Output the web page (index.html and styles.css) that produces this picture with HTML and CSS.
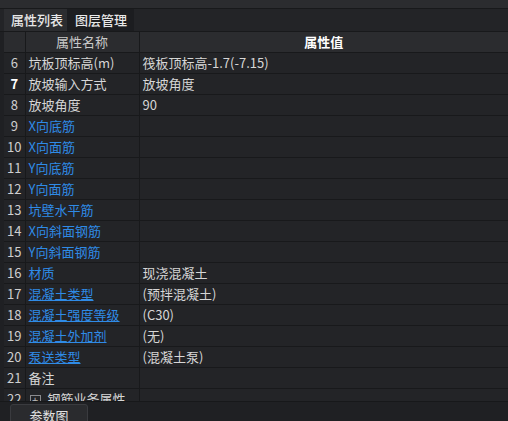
FILE: index.html
```html
<!DOCTYPE html>
<html lang="zh-CN">
<head>
<meta charset="utf-8">
<link rel="stylesheet" href="styles.css">
</head>
<body>
<div class="top"></div>
<div class="tabs">
  <div class="tab active">属性列表</div>
  <div class="tab">图层管理</div>
</div>
<div class="grid-wrap">
  <table class="grid">
    <colgroup><col class="c-num"><col class="c-name"><col class="c-val"></colgroup>
    <thead>
      <tr><th></th><th class="h-name">属性名称</th><th class="h-val">属性值</th></tr>
    </thead>
    <tbody>
      <tr><td class="num">6</td><td>坑板顶标高(m)</td><td>筏板顶标高-1.7(-7.15)</td></tr>
      <tr><td class="num cur">7</td><td>放坡输入方式</td><td>放坡角度</td></tr>
      <tr><td class="num">8</td><td>放坡角度</td><td>90</td></tr>
      <tr><td class="num">9</td><td class="blue">X向底筋</td><td></td></tr>
      <tr><td class="num">10</td><td class="blue">X向面筋</td><td></td></tr>
      <tr><td class="num">11</td><td class="blue">Y向底筋</td><td></td></tr>
      <tr><td class="num">12</td><td class="blue">Y向面筋</td><td></td></tr>
      <tr><td class="num">13</td><td class="blue">坑壁水平筋</td><td></td></tr>
      <tr><td class="num">14</td><td class="blue">X向斜面钢筋</td><td></td></tr>
      <tr><td class="num">15</td><td class="blue">Y向斜面钢筋</td><td></td></tr>
      <tr><td class="num">16</td><td class="blue">材质</td><td>现浇混凝土</td></tr>
      <tr><td class="num">17</td><td class="blue"><span class="ul">混凝土类型</span></td><td>(预拌混凝土)</td></tr>
      <tr><td class="num">18</td><td class="blue"><span class="ul">混凝土强度等级</span></td><td>(C30)</td></tr>
      <tr><td class="num">19</td><td class="blue"><span class="ul">混凝土外加剂</span></td><td>(无)</td></tr>
      <tr><td class="num">20</td><td class="blue"><span class="ul">泵送类型</span></td><td>(混凝土泵)</td></tr>
      <tr><td class="num">21</td><td>备注</td><td></td></tr>
      <tr><td class="num">22</td><td><span class="plus">+</span>钢筋业务属性</td><td></td></tr>
    </tbody>
  </table>
</div>
<div class="bottom">
  <div class="btn">参数图</div>
</div>
</body>
</html>
```

FILE: styles.css
```css
html, body {
  margin: 0;
  padding: 0;
}
body {
  width: 508px;
  height: 421px;
  overflow: hidden;
  background: #1f2023;
  font-family: "Noto Sans CJK SC", "Noto Sans", sans-serif;
  font-size: 13px;
  color: #d6d6d6;
}
.top {
  height: 8px;
  background: #2b2c2f;
  border-bottom: 1px solid #18191b;
}
.tabs {
  display: flex;
  height: 22px;
  padding-left: 4px;
  background: #232427;
  border-bottom: 1px solid #18191b;
}
.tab {
  flex: none;
  height: 22px;
  line-height: 22px;
  padding: 0 7px 0 8px;
  background: #1c1d20;
  color: #e8e8e8;
  font-weight: 500;
  white-space: nowrap;
}
.tab.active {
  background: #2c2d30;
  padding: 0 4px 0 7px;
}
.grid-wrap {
  height: 369px;
  overflow: hidden;
  padding-left: 4px;
  background: #1f2023;
  border-bottom: 1px solid #17181a;
}
.grid {
  border-collapse: collapse;
  width: 504px;
  table-layout: fixed;
  background: #232427;
}
.c-num { width: 21px; }
.c-name { width: 114px; }
.grid th, .grid td {
  height: 20px;
  padding: 0;
  line-height: 20px;
  border: 1px solid #18191b;
  white-space: nowrap;
  overflow: hidden;
}
.grid tr > *:first-child { border-left: none; }
.grid tr > *:last-child { border-right: none; }
.grid thead tr th { border-top: none; }
.grid th {
  background: #2b2c2f;
  font-weight: normal;
  color: #c9c9c9;
  text-align: center;
}
.grid th.h-val {
  color: #ffffff;
  font-weight: bold;
}
.grid td {
  padding-left: 3px;
}
.grid td.num {
  padding: 0;
  text-align: center;
  color: #cfcfcf;
}
.grid td.num.cur {
  color: #ffffff;
  font-weight: bold;
}
.blue {
  color: #2f8be6;
}
.ul {
  text-decoration: underline;
  text-underline-offset: 1px;
}
.plus {
  display: inline-block;
  width: 9px;
  height: 9px;
  line-height: 8px;
  border: 1px solid #8a8b8e;
  text-align: center;
  font-size: 11px;
  color: #bdbdbd;
  margin: 0 7px 0 1px;
  vertical-align: -1px;
}
.bottom {
  padding: 2px 0 0 10px;
}
.btn {
  width: 76px;
  height: 24px;
  line-height: 22px;
  text-align: center;
  background: #2a2b2e;
  border: 1px solid #3a3b3f;
  border-radius: 3px;
  color: #e0e0e0;
}
```
